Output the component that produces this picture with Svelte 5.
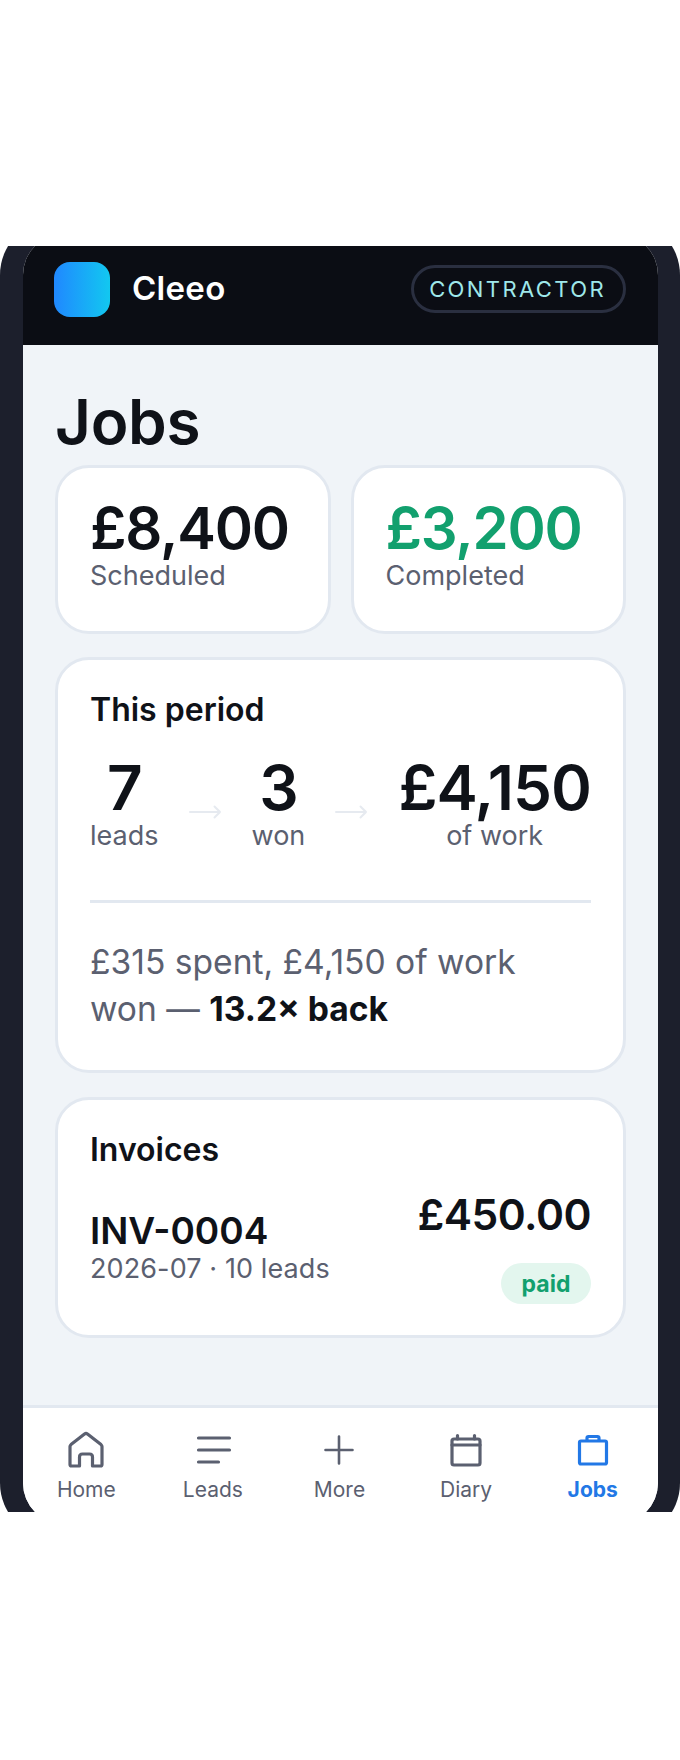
<script>
  const nav = [
    { id: 'home', label: 'Home' },
    { id: 'leads', label: 'Leads' },
    { id: 'more', label: 'More' },
    { id: 'diary', label: 'Diary' },
    { id: 'jobs', label: 'Jobs', active: true }
  ];
</script>

<div class="stage">
  <div class="clip">
    <div class="phone">
      <div class="screen">
        <header class="top">
          <div class="brand">
            <div class="logo"></div>
            <span class="name">Cleeo</span>
          </div>
          <span class="role">CONTRACTOR</span>
        </header>

        <main class="content">
          <h1>Jobs</h1>
          <div class="stats">
            <div class="card stat">
              <div class="value">£8,400</div>
              <div class="label">Scheduled</div>
            </div>
            <div class="card stat">
              <div class="value green">£3,200</div>
              <div class="label">Completed</div>
            </div>
          </div>

          <section class="card period">
            <h2>This period</h2>
            <div class="funnel">
              <div class="step">
                <div class="big">7</div>
                <div class="label">leads</div>
              </div>
              <svg class="arrow" viewBox="0 0 33 14" width="33" height="14" fill="none" stroke="currentColor" stroke-width="2" stroke-linecap="round" stroke-linejoin="round">
                <path d="M1 7h30M25.500 1.500 31 7l-5.500 5.500" />
              </svg>
              <div class="step">
                <div class="big">3</div>
                <div class="label">won</div>
              </div>
              <svg class="arrow" viewBox="0 0 33 14" width="33" height="14" fill="none" stroke="currentColor" stroke-width="2" stroke-linecap="round" stroke-linejoin="round">
                <path d="M1 7h30M25.500 1.500 31 7l-5.500 5.500" />
              </svg>
              <div class="step">
                <div class="big green">£4,150</div>
                <div class="label">of work</div>
              </div>
            </div>
            <div class="rule"></div>
            <p class="summary">£315 spent, £4,150 of work won — <strong>13.2× back</strong></p>
          </section>

          <section class="card invoices">
            <h2>Invoices</h2>
            <div class="invoice">
              <div class="inv-left">
                <div class="inv-no">INV-0004</div>
                <div class="label sub">2026-07 · 10 leads</div>
              </div>
              <div class="inv-right">
                <div class="amount">£450.00</div>
                <span class="paid">paid</span>
              </div>
            </div>
          </section>
        </main>

        <nav class="tabs">
          {#each nav as item}
            <div class="tab" class:active={item.active}>
              <svg viewBox="0 0 40 40" width="40" height="40" fill="none" stroke="currentColor" stroke-width="3.2" stroke-linecap="round" stroke-linejoin="round">
                {#if item.id === 'home'}
                  <path d="M4 16.500Q4 15.500 5 14.600L18.500 4Q20 3 21.500 4L35 14.600Q36 15.500 36 16.500V34.500Q36 36 34.500 36H26.500V27Q26.500 24 23.500 24H16.500Q13.500 24 13.500 27V36H5.500Q4 36 4 34.500Z" />
                {:else if item.id === 'leads'}
                  <path d="M5.500 8h31M5.500 20h31M5.500 32h20" />
                {:else if item.id === 'more'}
                  <path stroke-width="2.6" d="M20 6.500v27M6.500 20h27" />
                {:else if item.id === 'diary'}
                  <rect x="6" y="9" width="28" height="26" rx="2" />
                  <path d="M6 15h28M11.500 5.500V9M28.500 5.500V9" />
                {:else}
                  <rect x="6.500" y="11" width="27" height="23" rx="1.500" />
                  <path d="M14 10V8a1.500 1.500 0 0 1 1.500-1.500h9A1.500 1.500 0 0 1 26 8v2" />
                {/if}
              </svg>
              <span>{item.label}</span>
            </div>
          {/each}
        </nav>
      </div>
    </div>
  </div>
</div>

<style>
  :global(body) {
    margin: 0;
    background: #fff;
  }
  .stage {
    padding-top: 246px;
    height: 1514px;
    box-sizing: border-box;
    font-family: Inter, "Liberation Sans", sans-serif;
  }
  .clip {
    height: 1266px;
    overflow: hidden;
  }
  .phone {
    margin-top: -27px;
    height: 1320px;
    box-sizing: border-box;
    padding: 15px 22px 15px 23px;
    background: #1c1f2c;
    border-radius: 56px;
  }
  .screen {
    height: 100%;
    border-radius: 41px;
    overflow: hidden;
    display: flex;
    flex-direction: column;
    background: #f0f4f8;
  }
  .top {
    height: 111px;
    flex: none;
    box-sizing: border-box;
    padding: 28px 32px 0 31px;
    display: flex;
    justify-content: space-between;
    align-items: flex-start;
    background: #0b0d14;
  }
  .brand {
    display: flex;
    align-items: flex-start;
    gap: 22px;
  }
  .logo {
    width: 56px;
    height: 55px;
    border-radius: 16px;
    background: linear-gradient(90deg, #2088ff, #12c8f0);
  }
  .name {
    color: #fff;
    font-size: 33px;
    line-height: 52px;
    font-weight: 600;
    letter-spacing: 0.3px;
  }
  .role {
    margin-top: 3px;
    height: 48px;
    box-sizing: border-box;
    padding: 0 17px 0 15px;
    display: flex;
    align-items: center;
    border: 3px solid #2a2f40;
    border-radius: 24px;
    color: #9fe8ea;
    font-size: 22px;
    letter-spacing: 2.4px;
  }
  .content {
    flex: 1;
    min-height: 0;
    padding: 40px 32px 0 32px;
  }
  h1 {
    margin: 0 0 6px;
    font-size: 62px;
    line-height: 74px;
    font-weight: 600;
    color: #0f1218;
    letter-spacing: -0.3px;
  }
  .card {
    box-sizing: border-box;
    background: #fff;
    border: 3px solid #e2e8f0;
    border-radius: 34px;
  }
  .stats {
    display: grid;
    grid-template-columns: 1fr 1fr;
    gap: 20px;
  }
  .stat {
    height: 169px;
    padding: 29px 31px 0 32px;
  }
  .value {
    font-size: 58px;
    line-height: 63px;
    font-weight: 600;
    color: #0f1218;
    letter-spacing: -1.2px;
  }
  .green {
    color: #12a06e;
  }
  .label {
    font-size: 27px;
    line-height: 32px;
    color: #5b6070;
  }
  .sub {
    letter-spacing: 0.1px;
  }
  .period {
    margin-top: 23px;
    height: 416px;
    padding: 30px 32px 0 32px;
  }
  h2 {
    margin: 0;
    font-size: 32px;
    line-height: 40px;
    font-weight: 600;
    color: #0f1218;
  }
  .funnel {
    margin-top: 26px;
    display: flex;
    justify-content: space-between;
    align-items: flex-start;
  }
  .step {
    display: flex;
    flex-direction: column;
    align-items: center;
  }
  .big {
    font-size: 62px;
    line-height: 64px;
    font-weight: 600;
    color: #0f1218;
    letter-spacing: -1px;
  }
  .arrow {
    margin-top: 49px;
    color: #e6eaf0;
  }
  .rule {
    margin-top: 48px;
    height: 3px;
    background: #e2e8f0;
  }
  .summary {
    margin: 35px 0 0;
    padding-right: 60px;
    font-size: 33.600px;
    line-height: 47px;
    color: #5b6070;
  }
  .summary strong {
    font-weight: 700;
    color: #0f1218;
  }
  .invoices {
    margin-top: 24px;
    height: 241px;
    padding: 30px 32px 0 32px;
  }
  .invoice {
    margin-top: 20px;
    display: flex;
    justify-content: space-between;
    align-items: flex-start;
  }
  .inv-left {
    padding-top: 19px;
  }
  .inv-no {
    font-size: 37px;
    line-height: 44px;
    font-weight: 600;
    color: #0f1218;
  }
  .inv-right {
    display: flex;
    flex-direction: column;
    align-items: flex-end;
    gap: 23px;
  }
  .amount {
    font-size: 42.500px;
    line-height: 50px;
    font-weight: 600;
    color: #0f1218;
    letter-spacing: -0.5px;
  }
  .paid {
    height: 41px;
    width: 90px;
    display: flex;
    align-items: center;
    justify-content: center;
    border-radius: 21px;
    background: #e3f6ee;
    color: #12a06e;
    font-size: 23px;
    font-weight: 700;
  }
  .tabs {
    flex: none;
    height: 119px;
    box-sizing: border-box;
    padding: 22px 2px 0 0;
    display: grid;
    grid-template-columns: repeat(5, 1fr);
    background: #fff;
    border-top: 3px solid #e2e8f0;
  }
  .tab {
    display: flex;
    flex-direction: column;
    align-items: center;
    gap: 7px;
    color: #5b6070;
    font-size: 21px;
    line-height: 26px;
  }
  .tab.active {
    color: #2278e6;
    font-weight: 700;
  }
</style>
